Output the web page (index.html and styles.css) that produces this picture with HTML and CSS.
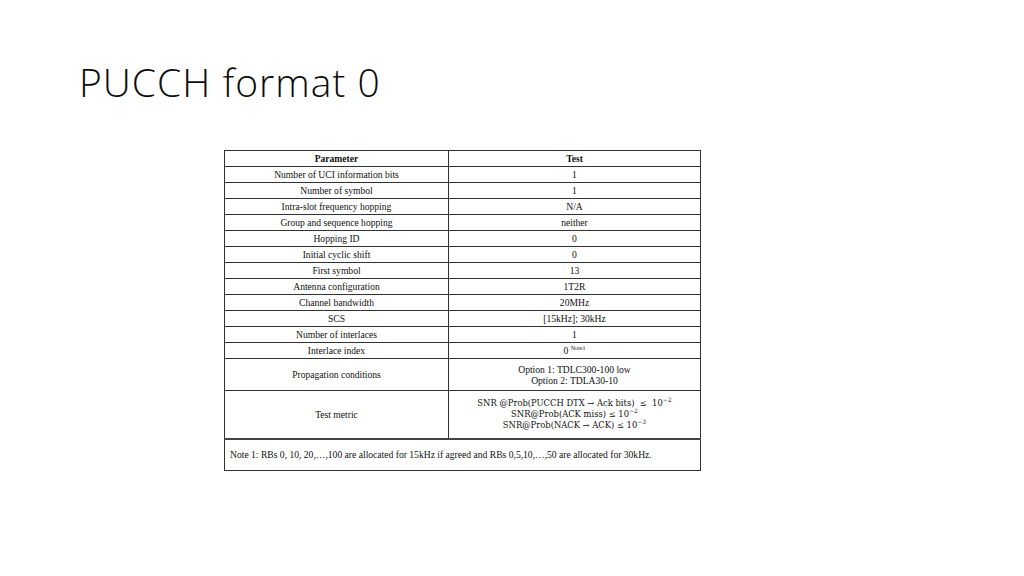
FILE: index.html
```html
<!DOCTYPE html>
<html>
<head>
<meta charset="utf-8">
<link rel="stylesheet" href="styles.css">
</head>
<body>
<div class="slide">
  <h1 class="title">PUCCH format 0</h1>
  <table class="params">
    <colgroup><col class="c1"><col class="c2"></colgroup>
    <tr class="row"><th>Parameter</th><th>Test</th></tr>
    <tr class="row"><td>Number of UCI information bits</td><td>1</td></tr>
    <tr class="row"><td>Number of symbol</td><td>1</td></tr>
    <tr class="row"><td>Intra-slot frequency hopping</td><td>N/A</td></tr>
    <tr class="row"><td>Group and sequence hopping</td><td>neither</td></tr>
    <tr class="row"><td>Hopping ID</td><td>0</td></tr>
    <tr class="row"><td>Initial cyclic shift</td><td>0</td></tr>
    <tr class="row"><td>First symbol</td><td>13</td></tr>
    <tr class="row"><td>Antenna configuration</td><td>1T2R</td></tr>
    <tr class="row"><td>Channel bandwidth</td><td>20MHz</td></tr>
    <tr class="row"><td>SCS</td><td>[15kHz]; 30kHz</td></tr>
    <tr class="row"><td>Number of interlaces</td><td>1</td></tr>
    <tr class="row"><td>Interlace index</td><td>0 <sup class="note-sup">Note1</sup></td></tr>
    <tr class="row-prop"><td>Propagation conditions</td><td>Option 1: TDLC300-100 low<br>Option 2: TDLA30-10</td></tr>
    <tr class="row-metric"><td>Test metric</td><td class="math">SNR @Prob(PUCCH DTX → Ack bits)&nbsp; ≤&nbsp; 10<sup>−2</sup><br>SNR@Prob(ACK miss) ≤ 10<sup>−2</sup><br>SNR@Prob(NACK → ACK) ≤ 10<sup>−3</sup></td></tr>
    <tr class="row-note"><td colspan="2" class="note">Note 1: RBs 0, 10, 20,…,100 are allocated for 15kHz if agreed and RBs 0,5,10,…,50 are allocated for 30kHz.</td></tr>
  </table>
</div>
</body>
</html>
```
FILE: styles.css
```css
html, body {
  margin: 0;
  padding: 0;
  background: #ffffff;
}
.slide {
  width: 1024px;
  height: 576px;
  box-sizing: border-box;
  padding: 58px 0 0 79px;
}
.title {
  margin: 0;
  font-family: "Open Sans", "Liberation Sans", sans-serif;
  font-weight: 300;
  font-size: 39px;
  line-height: 48px;
  color: #0d0d0d;
  letter-spacing: 1px;
}
.params {
  margin: 44px 0 0 145px;
  border-collapse: collapse;
  width: 476px;
  table-layout: fixed;
  font-family: "Liberation Serif", serif;
  font-size: 9.6px;
  color: #111111;
  border: 1.5px solid #444444;
}
.c1 { width: 224px; }
.c2 { width: 252px; }
.params th, .params td {
  border: 1px solid #333333;
  text-align: center;
  vertical-align: middle;
  padding: 0;
  line-height: 11px;
}
.params th { font-weight: bold; }
.row { height: 16px; }
.row-prop { height: 32px; }
.row-metric { height: 48px; }
.row-note { height: 32px; }
.row-note td { border-top: 2px solid #444444; }
.note {
  text-align: left !important;
  padding-left: 5px !important;
}
.note-sup {
  font-size: 6px;
  vertical-align: 4px;
  line-height: 0;
}
.math {
  font-family: "DejaVu Serif", "Liberation Serif", serif;
  font-size: 8.4px;
  line-height: 11px !important;
}
.math sup {
  font-size: 6px;
  vertical-align: 4px;
  line-height: 0;
}
```
